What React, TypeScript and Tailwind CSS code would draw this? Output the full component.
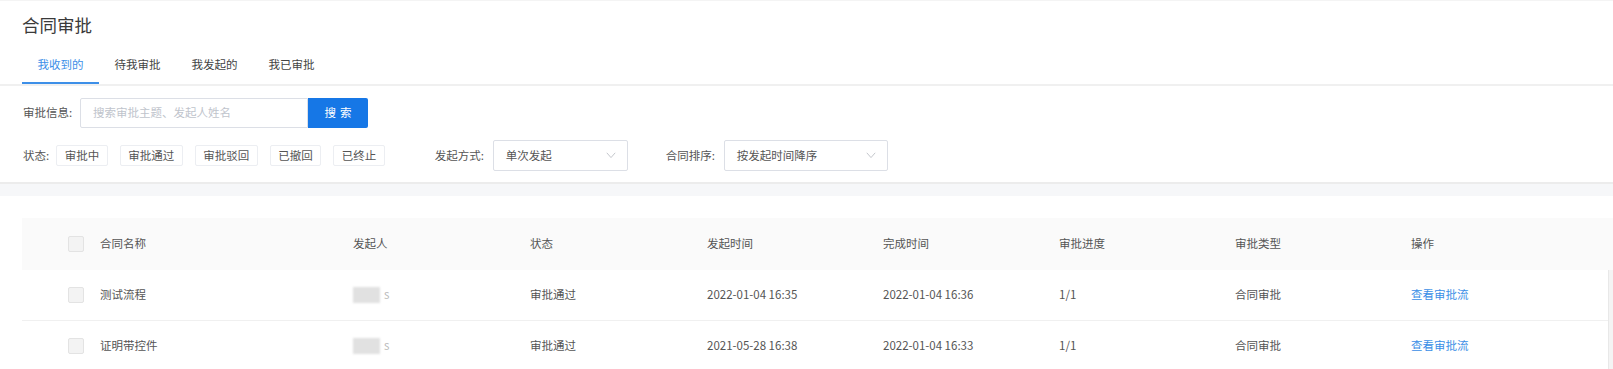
import React from "react";

const font = { fontFamily: '"Noto Sans CJK SC", "Noto Sans", sans-serif' };

const tabs = ["我收到的", "待我审批", "我发起的", "我已审批"];
const statuses = ["审批中", "审批通过", "审批驳回", "已撤回", "已终止"];

const columns = ["合同名称", "发起人", "状态", "发起时间", "完成时间", "审批进度", "审批类型", "操作"];

const rows = [
  {
    name: "测试流程",
    status: "审批通过",
    start: "2022-01-04 16:35",
    end: "2022-01-04 16:36",
    progress: "1/1",
    type: "合同审批",
  },
  {
    name: "证明带控件",
    status: "审批通过",
    start: "2021-05-28 16:38",
    end: "2022-01-04 16:33",
    progress: "1/1",
    type: "合同审批",
  },
];

const grid = "grid grid-cols-[78px_253px_177px_177px_176px_176px_176px_176px_1fr] items-center";

function Chevron() {
  return (
    <svg width="10" height="7" viewBox="0 0 10 7" className="text-[#c4c7cc]">
      <polyline points="0.8,0.8 5,5.6 9.2,0.8" fill="none" stroke="currentColor" strokeWidth="1" />
    </svg>
  );
}

function Select({ value, width }: { value: string; width: string }) {
  return (
    <div className={`flex h-[31px] items-center justify-between rounded-[2px] border border-[#dcdfe6] bg-white pl-[12px] pr-[11px] ${width}`}>
      <span className="text-[11.5px] text-[#555]">{value}</span>
      <Chevron />
    </div>
  );
}

function Checkbox() {
  return <span className="block h-[16px] w-[16px] rounded-[2px] border border-[#e3e3e3] bg-[#f3f3f3]" />;
}

function Blurred() {
  return (
    <span className="flex items-center">
      <span className="inline-block h-[16px] w-[27px] bg-[#e1e1e1] blur-[1px]" />
      <span className="ml-[4px] text-[#bbb]">s</span>
    </span>
  );
}

export default function App() {
  return (
    <div className="w-full h-[369px] overflow-hidden bg-white text-[#555]" style={font}>
      <header className="border-t border-[#f4f4f4] pt-[12px]">
        <h1 className="pl-[22px] text-[17.5px] leading-[24px] text-[#3a3a3a]">合同审批</h1>
        <nav className="mt-[10px] flex pl-[22px]">
          {tabs.map((t, i) => (
            <div
              key={t}
              className={`flex h-[37px] w-[77px] items-center justify-center border-b-2 text-[11.5px] ${
                i === 0 ? "border-[#3d8fe8] text-[#3d8fe8]" : "border-transparent text-[#444]"
              }`}
            >
              {t}
            </div>
          ))}
        </nav>
        <div className="h-[2px] bg-[#f0f0f0]" />
      </header>

      <section className="px-[23px] pt-[12px] pb-[11px] text-[11.5px]">
        <div className="flex items-center gap-[7px]">
          <span className="w-[50px]">审批信息:</span>
          <div className="flex h-[30px]">
            <div className="flex w-[228px] items-center rounded-l-[2px] border border-[#dcdfe6] pl-[12px] text-[#c0c4cc]">
              搜索审批主题、发起人姓名
            </div>
            <button className="flex w-[60px] items-center justify-center rounded-r-[2px] bg-[#1677e6] text-white tracking-[4px] pl-[4px]">
              搜索
            </button>
          </div>
        </div>

        <div className="mt-[12px] flex items-center">
          <span className="mr-[7px]">状态:</span>
          <div className="flex gap-[12px]">
            {statuses.map((s) => (
              <span key={s} className="flex h-[21px] items-center rounded-[2px] border border-[#eceef2] px-[7.5px] text-[#555]">
                {s}
              </span>
            ))}
          </div>
          <span className="ml-[50px] mr-[6px] w-[52px]">发起方式:</span>
          <Select value="单次发起" width="w-[135px]" />
          <span className="ml-[38px] mr-[6px] w-[52px]">合同排序:</span>
          <Select value="按发起时间降序" width="w-[164px]" />
        </div>
      </section>

      <div className="h-[14px] border-t-2 border-[#ececec] bg-[#f6f7f9]" />

      <section className="pt-[22px] pl-[22px] text-[11.5px] text-[#555]">
        <div className={`${grid} h-[52px] bg-[#fafafa]`}>
          <div className="pl-[46px]">
            <Checkbox />
          </div>
          {columns.map((c) => (
            <div key={c}>{c}</div>
          ))}
        </div>
        <div className="flex">
          <div className="flex-1">
            {rows.map((r) => (
              <div key={r.name} className={`${grid} h-[51px] border-b border-[#f0f0f0]`}>
                <div className="pl-[46px]">
                  <Checkbox />
                </div>
                <div>{r.name}</div>
                <div>
                  <Blurred />
                </div>
                <div>{r.status}</div>
                <div>{r.start}</div>
                <div>{r.end}</div>
                <div>{r.progress}</div>
                <div>{r.type}</div>
                <div className="text-[#3a8ee6]">查看审批流</div>
              </div>
            ))}
          </div>
          <div className="w-[5px] border-l border-[#e8e8e8] bg-[#f4f4f4]" />
        </div>
      </section>
    </div>
  );
}
